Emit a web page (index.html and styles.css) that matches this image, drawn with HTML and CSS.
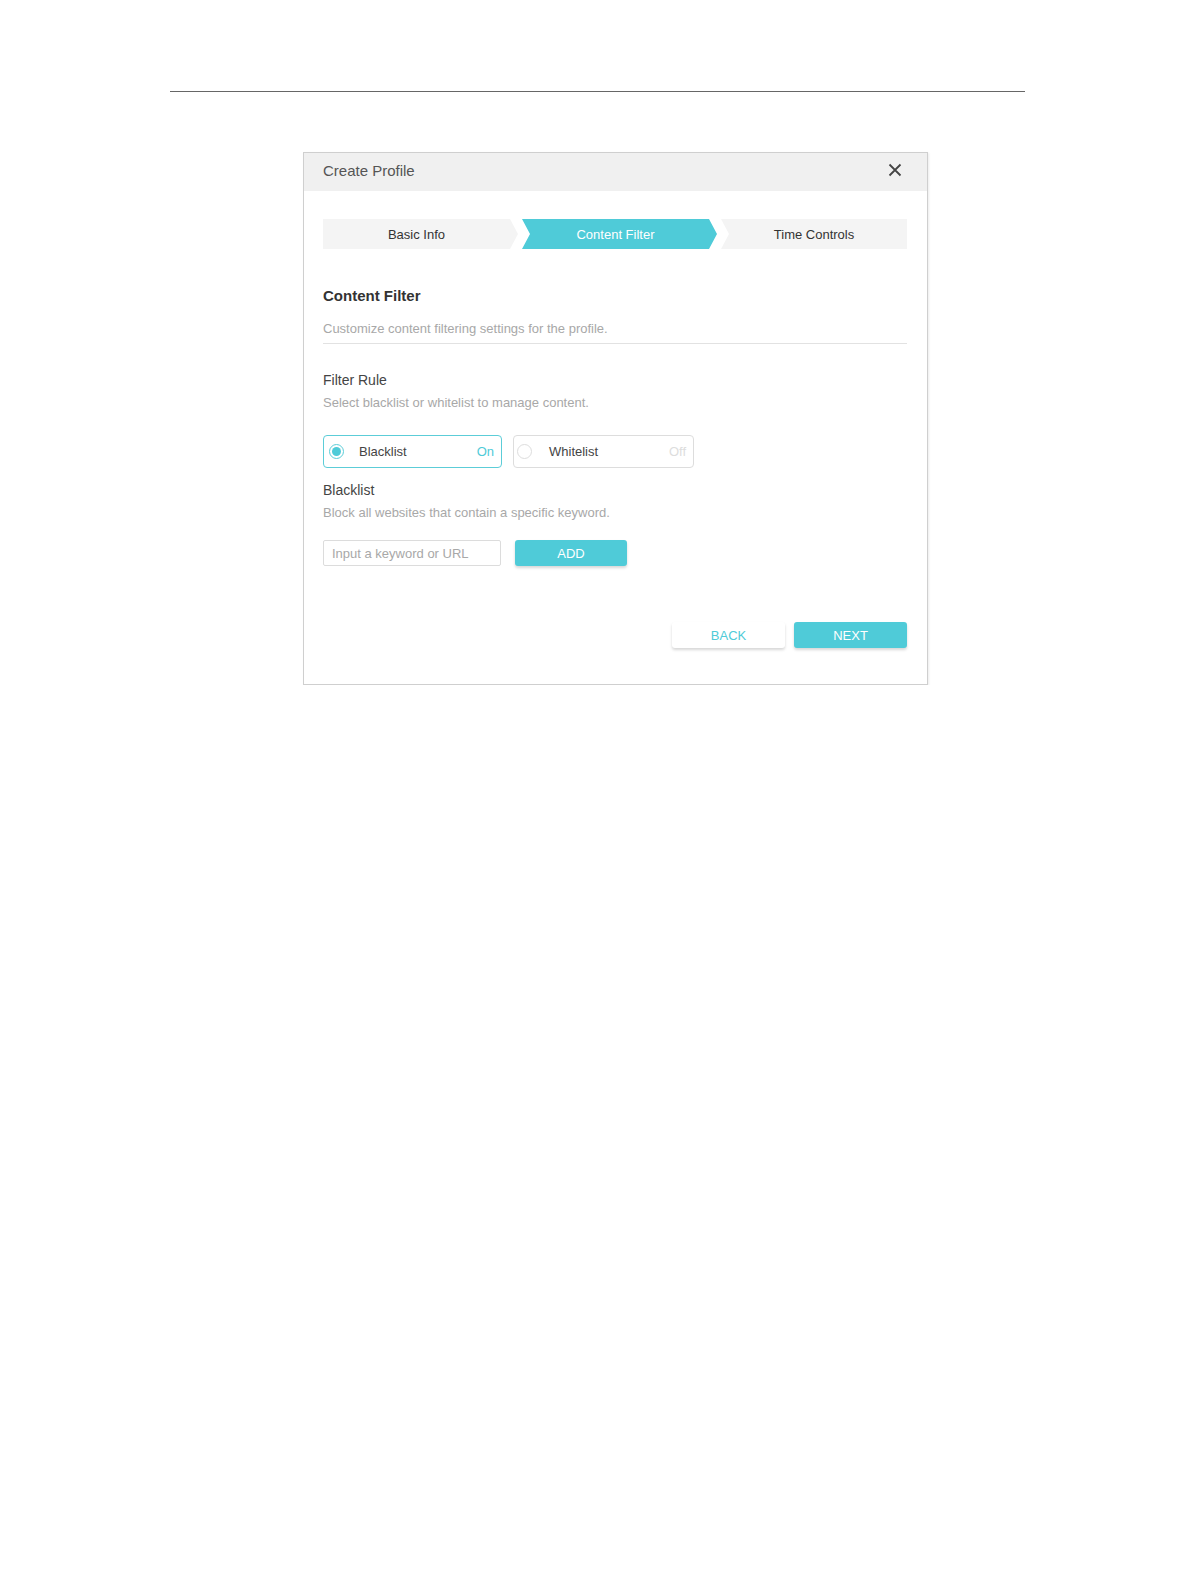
FILE: index.html
```html
<!DOCTYPE html>
<html lang="en">
<head>
  <meta charset="UTF-8" />
  <title>Create Profile - Content Filter</title>
  <link rel="stylesheet" href="styles.css">
</head>
<body>

  <div class="page">
    <div class="rule"></div>

    <div class="dialog">
      <div class="dialog-head">
        <span class="dialog-title">Create Profile</span>
        <svg class="close" width="14" height="14" viewBox="0 0 14 14">
          <path d="M1.5 1.5 L12.5 12.5 M12.5 1.5 L1.5 12.5" stroke="#444" stroke-width="1.8" fill="none" />
        </svg>
      </div>

      <div class="dialog-body">
        <!-- wizard steps -->
        <div class="steps">
          <div class="step step-first">Basic Info</div>
          <div class="step step-mid active">Content Filter</div>
          <div class="step step-last">Time Controls</div>
        </div>

        <h3 class="title">Content Filter</h3>
        <p class="intro">Customize content filtering settings for the profile.</p>

        <div class="label label-rule">Filter Rule</div>
        <div class="hint">Select blacklist or whitelist to manage content.</div>

        <div class="choices">
          <div class="choice checked">
            <span class="radio"></span>
            <span class="choice-name">Blacklist</span>
            <span class="state">On</span>
          </div>
          <div class="choice choice-wide">
            <span class="radio"></span>
            <span class="choice-name">Whitelist</span>
            <span class="state">Off</span>
          </div>
        </div>

        <div class="label label-list">Blacklist</div>
        <div class="hint">Block all websites that contain a specific keyword.</div>

        <div class="add-row">
          <input type="text" class="keyword" placeholder="Input a keyword or URL" />
          <button class="btn btn-add">ADD</button>
        </div>

        <div class="footer">
          <button class="btn btn-back">BACK</button>
          <button class="btn btn-next">NEXT</button>
        </div>
      </div>
    </div>
  </div>

</body>
</html>
```

FILE: styles.css
```css
body
{
  margin: 0;
  padding: 0;
  background: #ffffff;
  font-family: "Liberation Sans", Arial, sans-serif;
  color: #333;
}

.page
{
  width: 855px;
  margin-left: 170px;
  padding-top: 91px;
}

.rule
{
  border-top: 1px solid #666;
}

.dialog
{
  box-sizing: border-box;
  width: 625px;
  margin: 60px 0 0 133px;
  border: 1px solid #cfcfcf;
  box-shadow: 1px 1px 2px rgba(0, 0, 0, 0.08);
  background: #fff;
}

.dialog-head
{
  box-sizing: border-box;
  height: 38px;
  padding: 0 25px 4px 19px;
  background: #f0f0f0;
  display: flex;
  align-items: center;
  justify-content: space-between;
}

.dialog-title
{
  font-size: 15px;
  color: #555;
}

.dialog-body
{
  padding: 28px 20px 36px 19px;
}

/* steps */
.steps
{
  display: flex;
  gap: 4px;
  height: 30px;
}

.step
{
  box-sizing: border-box;
  flex: 0 0 195px;
  display: flex;
  align-items: center;
  justify-content: center;
  background: #f4f4f4;
  font-size: 13px;
  color: #333;
}

.step-first
{
  padding-right: 8px;
  clip-path: polygon(0 0, calc(100% - 8px) 0, 100% 50%, calc(100% - 8px) 100%, 0 100%);
}

.step-mid
{
  padding-right: 8px;
  clip-path: polygon(0 0, calc(100% - 8px) 0, 100% 50%, calc(100% - 8px) 100%, 0 100%, 8px 50%);
}

.step-last
{
  flex: 1;
  clip-path: polygon(0 0, 100% 0, 100% 100%, 0 100%, 8px 50%);
}

.step.active
{
  background: #4fcbd8;
  color: #fff;
}

.title
{
  margin: 37px 0 13px;
  font-size: 15px;
  line-height: 20px;
  font-weight: bold;
  color: #333;
}

.intro
{
  margin: 0;
  padding-bottom: 4px;
  border-bottom: 1px solid #e2e2e2;
  font-size: 13px;
  line-height: 20px;
  color: #a8a8a8;
}

.label
{
  font-size: 14px;
  line-height: 20px;
  color: #444;
}

.label-rule
{
  margin-top: 26px;
}

.label-list
{
  margin-top: 12px;
}

.hint
{
  margin-top: 3px;
  font-size: 13px;
  line-height: 20px;
  color: #a8a8a8;
}

/* filter choices */
.choices
{
  display: flex;
  gap: 11px;
  margin-top: 22px;
}

.choice
{
  box-sizing: border-box;
  width: 179px;
  height: 33px;
  padding: 0 7px 0 5px;
  border: 1px solid #ddd;
  border-radius: 4px;
  display: flex;
  align-items: center;
  font-size: 13px;
  color: #444;
}

.choice-wide
{
  width: 181px;
  padding-left: 3px;
}

.radio
{
  box-sizing: border-box;
  width: 15px;
  height: 15px;
  border: 1px solid #ddd;
  border-radius: 50%;
  display: flex;
  align-items: center;
  justify-content: center;
}

.choice-name
{
  flex: 1;
  margin-left: 15px;
}

.choice-wide .choice-name
{
  margin-left: 17px;
}

.state
{
  color: #ddd;
}

.choice.checked
{
  border-color: #5ccdd8;
}

.choice.checked .radio
{
  border-color: #5ccdd8;
}

.choice.checked .radio::after
{
  content: "";
  width: 9px;
  height: 9px;
  border-radius: 50%;
  background: #4fcbd8;
}

.choice.checked .state
{
  color: #4fcbd8;
}

/* keyword row */
.add-row
{
  display: flex;
  gap: 14px;
  margin-top: 17px;
}

.keyword
{
  box-sizing: border-box;
  width: 178px;
  height: 26px;
  margin: 0;
  padding: 0 8px;
  border: 1px solid #dcdcdc;
  border-radius: 2px;
  font-family: inherit;
  font-size: 13px;
  color: #444;
  outline: none;
}

.keyword::placeholder
{
  color: #a8a8a8;
}

.btn
{
  height: 26px;
  width: 112px;
  border: none;
  border-radius: 3px;
  font-family: inherit;
  font-size: 13px;
  cursor: pointer;
  box-shadow: 0 2px 3px rgba(0, 0, 0, 0.16);
}

.btn-add,
.btn-next
{
  background: #4fcbd8;
  color: #fff;
}

.footer
{
  display: flex;
  justify-content: flex-end;
  gap: 9px;
  margin-top: 56px;
}

.btn-back
{
  width: 113px;
  background: #fff;
  color: #4fcbd8;
}

.btn-next
{
  width: 113px;
}
```
